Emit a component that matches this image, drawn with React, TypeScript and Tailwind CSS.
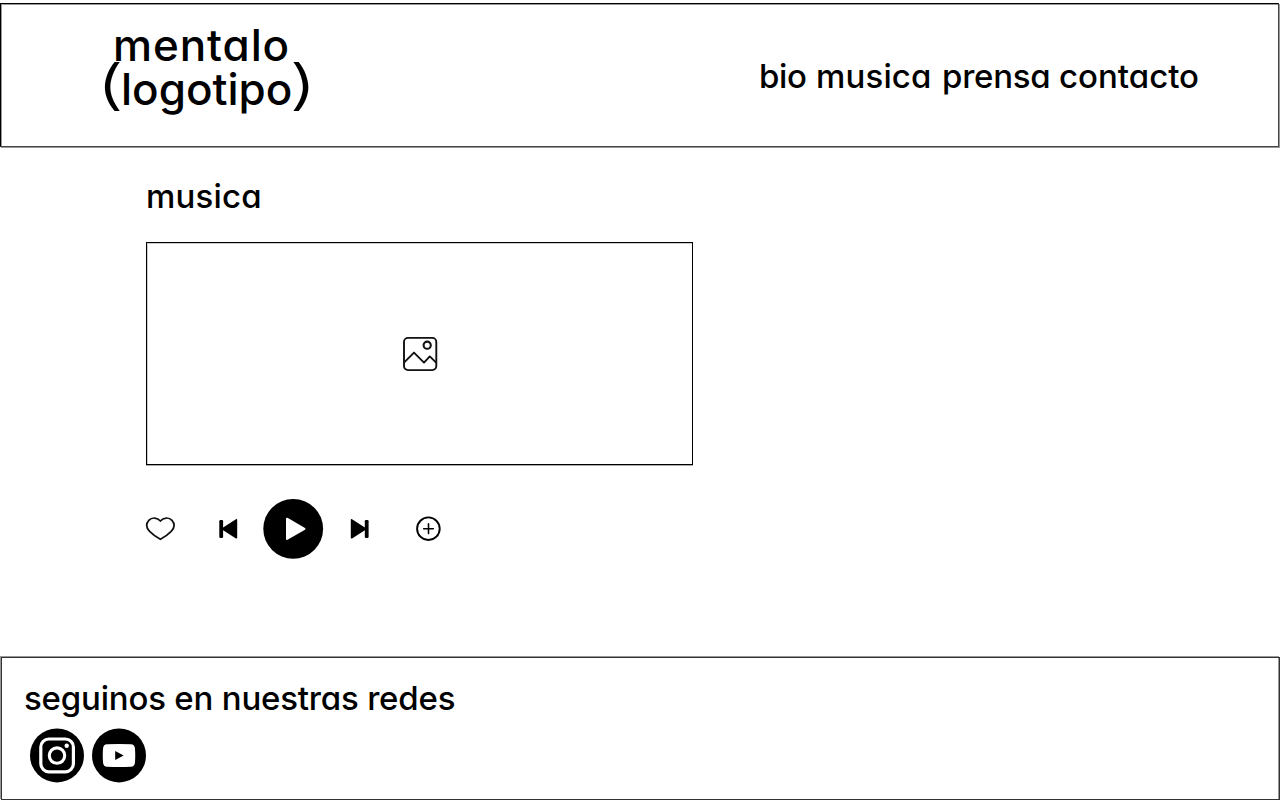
const links = [
  { label: 'bio', box: 'w-[57px]', track: 'tracking-[-0.4px]' },
  { label: 'musica', box: 'w-[126px]', track: 'tracking-[0.15px]' },
  { label: 'prensa', box: 'w-[117px]', track: 'tracking-[-0.25px]' },
  { label: 'contacto', box: 'w-[142px]', track: 'tracking-[0px]' },
];

function ImageIcon() {
  return (
    <svg width="36" height="36" viewBox="402 336 36 36" fill="none" stroke="#111" strokeWidth="1.9" strokeLinejoin="round">
      <rect x="404" y="337.9" width="32.3" height="32.2" rx="4" />
      <circle cx="427.2" cy="345.2" r="3.6" strokeWidth="2.1" />
      <path d="M404 362.6 L414 352.6 L424 362.6 L429.8 356.4 L436.2 362.6" />
    </svg>
  );
}

function Controls() {
  return (
    <div className="-ml-px mt-[33px] flex h-[62px] items-center">
      <button aria-label="me gusta" className="w-[72px]">
        <svg width="32" height="30" viewBox="145 514 32 30" fill="none" stroke="#111" strokeWidth="1.7" strokeLinejoin="round">
          <path d="M160.4 521 C157.5 517.3 151.8 517 148.8 520.4 C145.9 523.8 146.4 528 149.6 531.3 C152.6 534.4 156.3 536.9 160.4 539.3 C164.5 536.9 168.2 534.4 171.2 531.3 C174.4 528 174.9 523.8 172 520.4 C169 517 163.3 517.3 160.4 521 Z" />
        </svg>
      </button>
      <button aria-label="anterior" className="w-[45px]">
        <svg width="22" height="24" viewBox="217 517 22 24">
          <rect x="219.3" y="520" width="3.8" height="18" rx="1.2" />
          <path d="M236.4 519.8 V537.8 L222.4 528.8 Z" stroke="#000" strokeWidth="1.6" strokeLinejoin="round" />
        </svg>
      </button>
      <button aria-label="reproducir" className="w-[86px]">
        <svg width="62" height="62" viewBox="262 498 62 62">
          <circle cx="293.2" cy="528.8" r="29.9" />
          <path d="M287 518.7 V539 L304.5 528.8 Z" fill="#fff" stroke="#fff" strokeWidth="2" strokeLinejoin="round" />
        </svg>
      </button>
      <button aria-label="siguiente" className="w-[66px]">
        <svg width="22" height="24" viewBox="348 517 22 24">
          <rect x="364.8" y="520" width="3.8" height="18" rx="1.2" />
          <path d="M351.6 519.8 V537.8 L365.6 528.8 Z" stroke="#000" strokeWidth="1.6" strokeLinejoin="round" />
        </svg>
      </button>
      <button aria-label="agregar">
        <svg width="28" height="28" viewBox="414 515 28 28" fill="none" stroke="#000" strokeLinecap="round">
          <circle cx="428.4" cy="528.7" r="11.3" strokeWidth="1.9" />
          <path d="M423.7 528.7 H433.3 M428.5 523.9 V533.5" strokeWidth="1.6" />
        </svg>
      </button>
    </div>
  );
}

export default function App() {
  return (
    <div className="flex h-[800px] w-[1280px] flex-col overflow-hidden bg-white pt-[3px] font-['Inter',sans-serif] font-medium text-black [font-feature-settings:'cv11'] [&_button]:block [&_svg]:block">
      <header className="flex h-[144px] w-[1279px] justify-between border border-black border-r-[#444] border-b-[#444] pl-[95px] shadow-[inset_1px_1px_0_#999,1px_1px_0_#999]">
        <h1 className="mt-[20px] w-[218px] text-[44px] leading-[43px] font-medium whitespace-nowrap">
          <span className="block h-[43px] pl-[17px] tracking-[0.9px]">mentalo</span>
          <span className="mt-px flex h-[43px]">
            <span className="-mt-[5px] block w-[25px] origin-left scale-x-150 text-[54px] font-light">(</span>
            <span className="block w-[168px]">logotipo</span>
            <span className="-mt-[5px] block w-[20px] origin-left scale-x-150 text-[54px] font-light">)</span>
          </span>
        </h1>
        <nav className="mr-[77px] mt-[52px] flex text-[33px] leading-[40px] whitespace-nowrap">
          {links.map((l) => (
            <a key={l.label} className={`${l.box} ${l.track}`}>{l.label}</a>
          ))}
        </nav>
      </header>
      <main className="flex h-[510px] flex-col pl-[146px] pt-[29px]">
        <h2 className="h-[40px] text-[33px] leading-[40px] font-medium tracking-[0.2px]">musica</h2>
        <div className="mt-[26px] flex h-[223px] w-[547px] shrink-0 items-center justify-center border border-black shadow-[inset_1px_1px_0_#ccc,0_1px_0_#aaa]">
          <ImageIcon />
        </div>
        <Controls />
      </main>
      <footer className="ml-px flex h-[143px] flex-col border border-[#333] pl-[22px] shadow-[-1px_-1px_0_#999,inset_-1px_0_0_#999]">
        <p className="mt-[20px] text-[33px] leading-[40px] tracking-[-0.2px] whitespace-nowrap">seguinos en nuestras redes</p>
        <div className="mt-[10px] flex gap-[6px] pl-[5px]">
          <a aria-label="Instagram">
            <svg width="56" height="56" viewBox="29 728 56 56">
              <circle cx="57" cy="755.4" r="27" />
              <rect x="40.8" y="739" width="32.6" height="32.8" rx="8" fill="none" stroke="#fff" strokeWidth="3.2" />
              <circle cx="57" cy="755.6" r="7.7" fill="none" stroke="#fff" strokeWidth="3.1" />
              <circle cx="66.7" cy="745.8" r="2.2" fill="#fff" />
            </svg>
          </a>
          <a aria-label="YouTube">
            <svg width="56" height="56" viewBox="91 728 56 56">
              <circle cx="119" cy="755.4" r="27" />
              <path d="M107 744.3 Q119 743.6 131 744.3 Q134.5 744.5 134.9 748 Q135.6 755.5 134.9 763 Q134.5 766.6 131 766.8 Q119 767.4 107 766.8 Q103.5 766.6 103.1 763 Q102.4 755.5 103.1 748 Q103.5 744.5 107 744.3 Z" fill="#fff" />
              <path d="M115.2 751 V760 L123.6 755.5 Z" />
            </svg>
          </a>
        </div>
      </footer>
    </div>
  );
}
